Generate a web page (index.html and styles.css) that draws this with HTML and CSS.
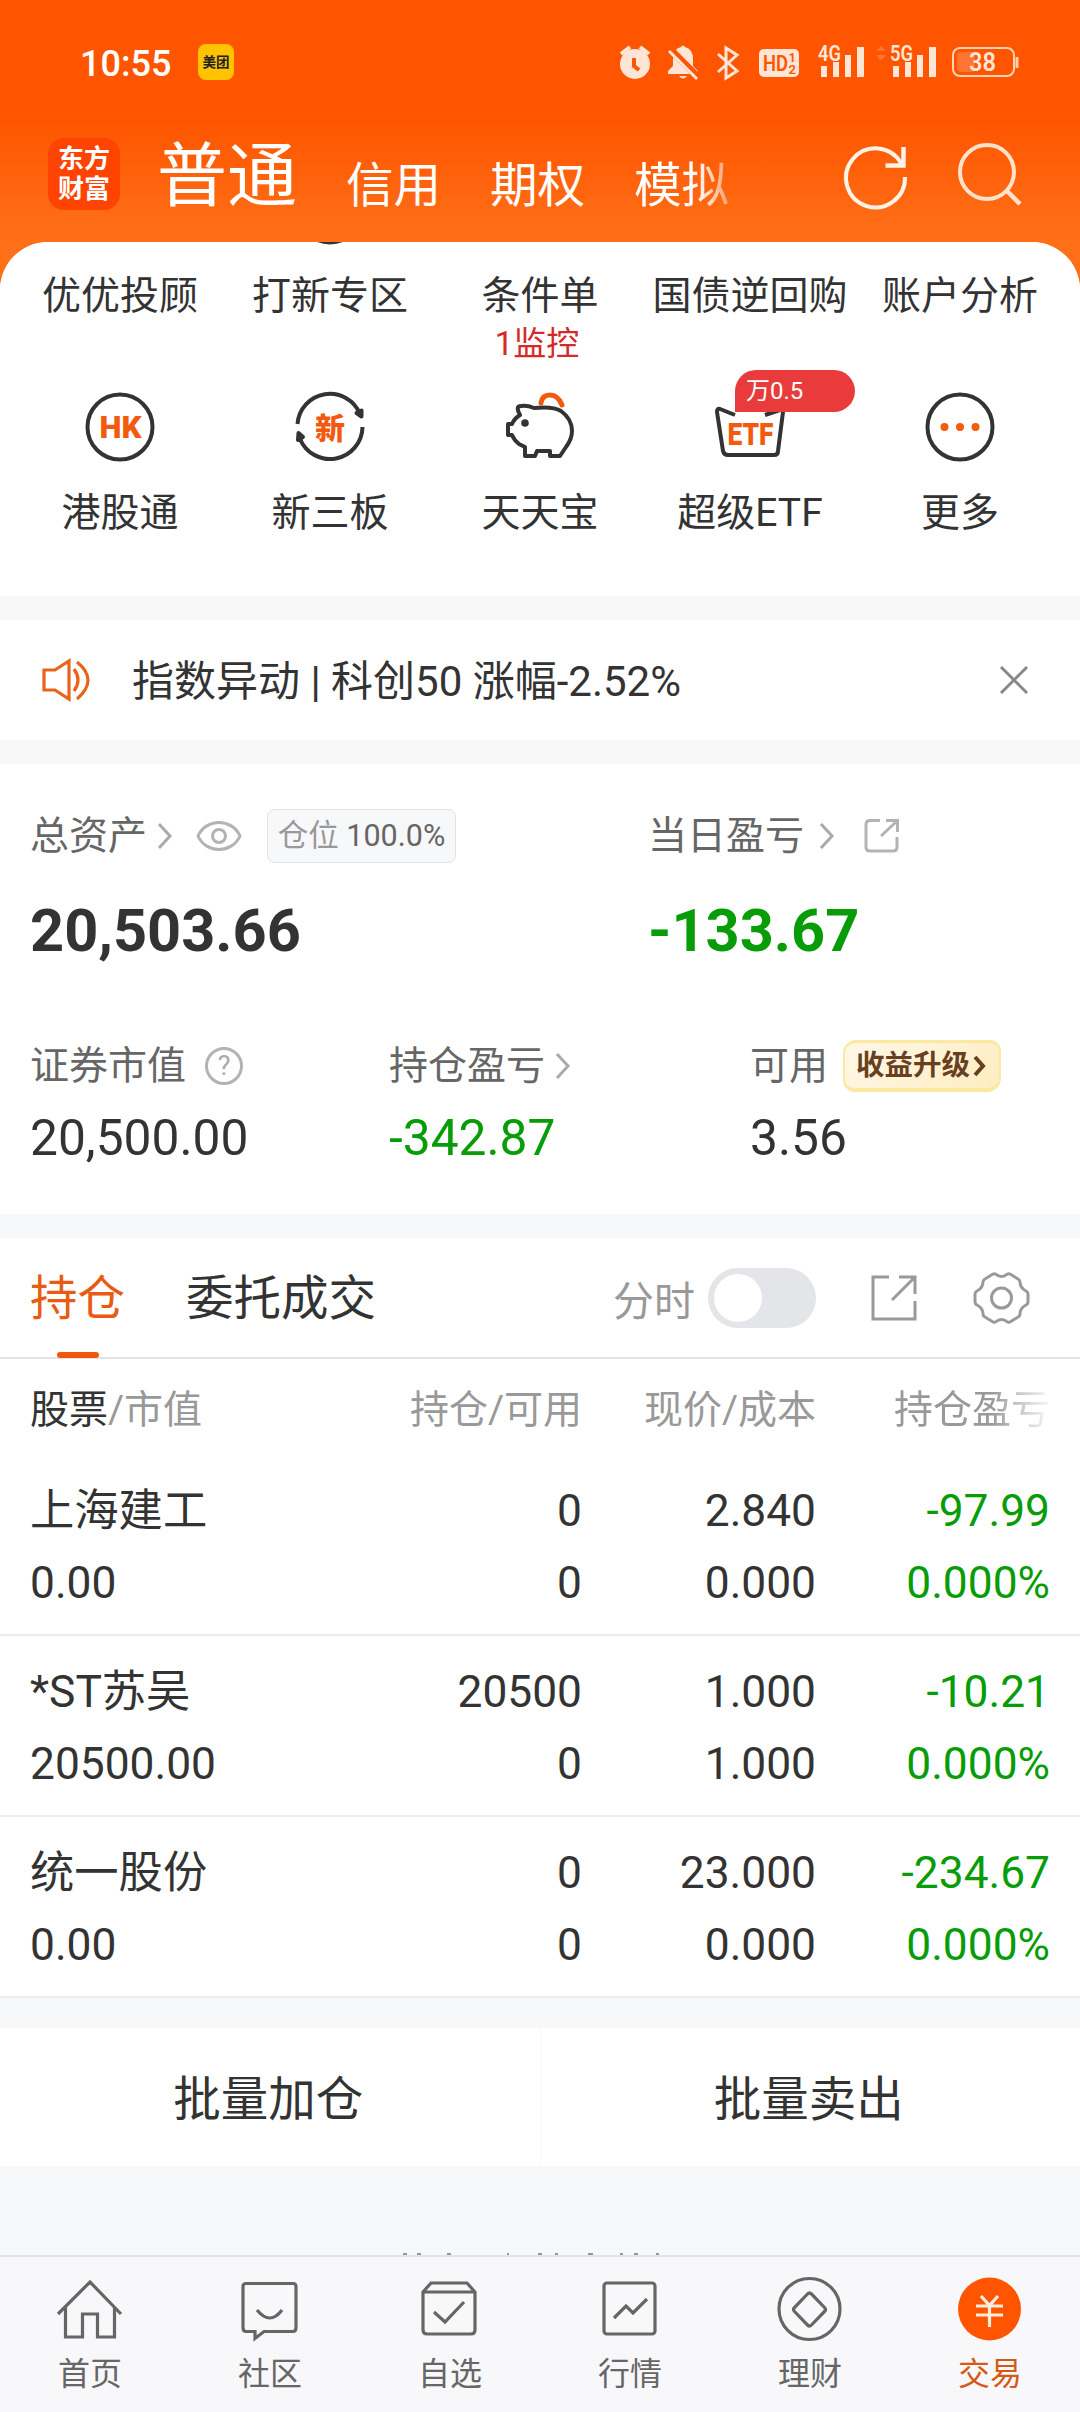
FILE: index.html
```html
<!DOCTYPE html>
<html lang="zh-CN">
<head>
<meta charset="utf-8">
<title>交易</title>
<link rel="stylesheet" href="styles.css">
</head>
<body>
<div class="screen">
  <header class="top">
    <div class="status">
      <span class="clock">10:55</span>
      <span class="app-badge">美团</span>
      <svg class="status-icons" viewBox="610 40 420 44" width="420" height="44">
        <g fill="#ffe5d6">
          <circle cx="635" cy="64" r="15"/>
          <path d="M621 54l9-7M649 54l-9-7" stroke="#ffe5d6" stroke-width="4"/>
          <path d="M634 58v8l5 4" stroke="#ff5500" stroke-width="4" fill="none"/>
          <path d="M681 47q2-3 4 0q8 2 8 12v7l5 5v3h-30v-3l5-5v-7q0-10 8-12zM679 76h8q-4 5-8 0z"/>
          <path d="M670 49l28 28" stroke="#ff5500" stroke-width="7"/>
          <path d="M669 51l28 28" stroke="#ffe5d6" stroke-width="3"/>
          <path d="M718 54l19 17l-11 7v-30l11 7l-19 17" fill="none" stroke="#ffe5d6" stroke-width="3"/>
          <rect x="759" y="49" width="40" height="28" rx="5"/>
          <path d="M821 66h6v11h-6zM833 62h6v15h-6zM845 55h6v22h-6zM857 47h7v30h-7zM893 66h6v11h-6zM905 62h6v15h-6zM917 55h6v22h-6zM929 47h7v30h-7z"/>
        </g>
        <path d="M881 46l5 5h-10zM881 61l5-6h-10z" fill="#ff7430"/>
        <g class="status-label" fill="#ffe5d6">
          <text x="818" y="61" font-size="22" textLength="23" lengthAdjust="spacingAndGlyphs">4G</text>
          <text x="890" y="61" font-size="22" textLength="23" lengthAdjust="spacingAndGlyphs">5G</text>
          <text x="763" y="71" font-size="22" fill="#ff5500" textLength="25" lengthAdjust="spacingAndGlyphs">HD</text>
          <text font-size="13" fill="#ff5500"><tspan x="788.500" y="62">1</tspan><tspan x="788.500" y="74">2</tspan></text>
        </g>
        <rect x="953" y="48" width="61" height="28" rx="7" fill="none" stroke="#ffd2b0" stroke-width="2"/>
        <rect x="957" y="52" width="18" height="20" rx="4" fill="#ff7433"/>
        <path d="M1017 57v11" stroke="#ffd2b0" stroke-width="3"/>
        <text class="status-label" x="969" y="71" font-size="25" textLength="27" lengthAdjust="spacingAndGlyphs" fill="#ffe5d6">38</text>
      </svg>
    </div>
    <div class="titlebar">
      <div class="logo">东方<br>财富</div>
      <nav class="account-tabs">
        <span class="account on">普通</span>
        <span class="account">信用</span>
        <span class="account">期权</span>
        <span class="account last">模拟</span>
      </nav>
      <svg class="top-actions" viewBox="840 138 190 74" width="190" height="74" fill="none">
        <path d="M901 162A29.500 29.500 0 1 0 905 176" stroke="#fff3e8" stroke-width="4"/>
        <path d="M903.500 146v18.500h-18" stroke="#fff3e8" stroke-width="4.500"/>
        <circle cx="987" cy="171" r="27" stroke="#ffe2cb" stroke-width="4"/>
        <path d="M1006 189l14 14" stroke="#ffe2cb" stroke-width="4.500"/>
      </svg>
    </div>
  </header>

  <main class="panel">
    <section class="shortcuts">
      <svg class="peek" viewBox="0 242 1080 3" width="1080" height="3"><circle cx="330" cy="210" r="34.500" fill="#333"/></svg>
      <div class="shortcut-row first">
        <div class="shortcut"><span>优优投顾</span></div>
        <div class="shortcut"><span>打新专区</span></div>
        <div class="shortcut"><span>条件单</span><em class="monitor">1监控</em></div>
        <div class="shortcut"><span>国债逆回购</span></div>
        <div class="shortcut"><span>账户分析</span></div>
      </div>
      <div class="shortcut-row">
        <div class="shortcut">
          <svg class="glyph" viewBox="80 387 80 80"><circle cx="120" cy="427" r="32.500"/><text class="orange-text" x="99.500" y="438" font-size="31" textLength="42" lengthAdjust="spacingAndGlyphs">HK</text></svg>
          <span>港股通</span>
        </div>
        <div class="shortcut">
          <svg class="glyph" viewBox="290 387 80 80"><path d="M297.500 424A32.500 32.500 0 0 1 360 414M362.500 427A32.500 32.500 0 0 1 300 439"/><path d="M356.500 413l5-2.500 0 6zM303 437l-5 3 .5-7z" fill="#333"/><text class="orange-text" x="315" y="438.500" font-size="30">新</text></svg>
          <span>新三板</span>
        </div>
        <div class="shortcut">
          <svg class="glyph" viewBox="500 387 80 80"><path d="M541 403q1-8 9-8t12 10" stroke="#f15a0f" stroke-linecap="round" stroke-width="5"/><path d="M520 415q-5-9 1-9q6-1 13 2q19-2 27 3q11 8 11 20q0 8-6 16l-6 9h-10v-5h-13l-2 5h-10v-9l-6-3q-5-4-7-9h-4v-11h4q2-5 8-9z"/><circle cx="525" cy="423" r="3.800" fill="#333" stroke="none"/></svg>
          <span>天天宝</span>
        </div>
        <div class="shortcut">
          <svg class="glyph" viewBox="710 387 80 80"><path d="M735 415l-15-6q-3-1-3 3l6 39q1 4 5 4h46q4 0 4-4l5-39q0-3-3-2l-15 5"/><text class="orange-text" x="727.500" y="444.500" font-size="32" textLength="46" lengthAdjust="spacingAndGlyphs">ETF</text></svg>
          <span>超级ETF</span><i class="rate-tag">万0.5</i>
        </div>
        <div class="shortcut">
          <svg class="glyph" viewBox="920 387 80 80"><circle cx="960" cy="427" r="32.500"/><g fill="#f15a0f" stroke="none"><circle cx="944.500" cy="427" r="4"/><circle cx="960" cy="427" r="4"/><circle cx="975.500" cy="427" r="4"/></g></svg>
          <span>更多</span>
        </div>
      </div>
    </section>

    <section class="notice">
      <svg viewBox="40 658 52 44" width="52" height="44" fill="none" stroke="#e8641b" stroke-width="3.200"><path d="M44 670v20h11l14 9v-38l-14 9z"/><path d="M74 669q8 11 0 22M77 662q22 18 0 37"/></svg>
      <span class="notice-text">指数异动 | 科创50 涨幅-2.52%</span>
      <svg viewBox="998 664 32 32" width="32" height="32" fill="none" stroke="#888" stroke-width="3"><path d="M1001 667l26 26M1027 667l-26 26"/></svg>
    </section>

    <section class="assets">
      <div class="asset-main">
        <div class="asset total">
          <div class="label"><span>总资产</span>
            <svg class="chev" viewBox="0 0 16 26"><path d="M2 1l11 12-11 12"/></svg>
            <svg class="eye" viewBox="0 0 46 34" width="46" height="34"><path d="M2 17C10-1 36-1 44 17C36 35 10 35 2 17z"/><circle cx="23" cy="17" r="6.500"/></svg>
            <span class="position">仓位 <b>100.0%</b></span>
          </div>
          <strong>20,503.66</strong>
        </div>
        <div class="asset">
          <div class="label"><span>当日盈亏</span>
            <svg class="chev far" viewBox="0 0 16 26"><path d="M2 1l11 12-11 12"/></svg>
            <svg class="share" viewBox="0 0 36 36" width="36" height="36"><path d="M16 2.500H6q-4 0-4 4V29q0 4 4 4h23q4 0 4-4V19M22 2.500h11.500V14M33 3L17 18"/></svg>
          </div>
          <strong class="down">-133.67</strong>
        </div>
      </div>
      <div class="asset-sub">
        <div class="asset market"><div class="label"><span>证券市值</span><i class="help">?</i></div><p>20,500.00</p></div>
        <div class="asset holding"><div class="label"><span>持仓盈亏</span><svg class="chev" viewBox="0 0 16 26"><path d="M2 1l11 12-11 12"/></svg></div><p class="down">-342.87</p></div>
        <div class="asset"><div class="label"><span>可用</span><span class="upgrade">收益升级<svg viewBox="0 0 14 22" width="14" height="22"><path d="M2 2l8 9-8 9"/></svg></span></div><p>3.56</p></div>
      </div>
    </section>

    <section class="positions">
      <div class="tabs">
        <span class="tab on">持仓</span>
        <span class="tab">委托成交</span>
        <span class="minute">分时</span>
        <span class="switch"></span>
        <svg class="tool" viewBox="868 1272 52 52" width="52" height="52"><path d="M889 1277h-16v42h42v-18M899 1277h16v17M915 1277l-23 23"/></svg>
        <svg class="tool gear" viewBox="972 1270 60 56" width="60" height="56"><path d="M993 1274q2-1 4 1q4.500 3 9 0q2-2 4-1l8 5q2 1 2 3q0 6 6 9q2 1 2 3v8q0 2-2 3q-6 3-6 9q0 2-2 3l-8 5q-2 1-4-1q-4.500-3-9 0q-2 2-4 1l-8-5q-2-1-2-3q0-6-6-9q-2-1-2-3v-8q0-2 2-3q6-3 6-9q0-2 2-3z"/><circle cx="1001.500" cy="1298" r="10"/></svg>
      </div>
      <div class="row head"><span><b>股票</b>/市值</span><span>持仓/可用</span><span>现价/成本</span><span class="fade">持仓盈亏</span></div>
      <div class="row"><span>上海建工</span><span>0</span><span>2.840</span><span class="down">-97.99</span><span>0.00</span><span>0</span><span>0.000</span><span class="down">0.000%</span></div>
      <div class="row"><span>*ST苏吴</span><span>20500</span><span>1.000</span><span class="down">-10.21</span><span>20500.00</span><span>0</span><span>1.000</span><span class="down">0.000%</span></div>
      <div class="row"><span>统一股份</span><span>0</span><span>23.000</span><span class="down">-234.67</span><span>0.00</span><span>0</span><span>0.000</span><span class="down">0.000%</span></div>
    </section>

    <div class="batch"><button>批量加仓</button><button>批量卖出</button></div>
    <svg class="footer-peek" viewBox="390 2253 300 2" width="300" height="2"><path d="M403 2254h4m10 0h4m26 0h4m56 0h2m29 0h4m13 0h3m30 0h5m27 0h3m11 0h4m18 0h3" stroke="#777" stroke-width="1.500"/></svg>
  </main>

  <nav class="bottom">
    <a><svg viewBox="55 2275 70 68"><path d="M58 2314l32-32 31 32M65.500 2307v30h17v-23h15v23h17v-30"/></svg>首页</a>
    <a><svg viewBox="235 2275 70 68"><path d="M246 2283.500h47q3 0 3 3v41q0 4-3 4h-29l-9 7v-7h-9q-3 0-3-4v-41q0-3 3-3zM257 2310q13 16 25 0"/></svg>社区</a>
    <a><svg viewBox="415 2275 70 68"><path d="M431 2283h36l8 9v38q0 4-4 4h-44q-4 0-4-4v-38zM423 2292h52M434 2312l11 10 19-20"/></svg>自选</a>
    <a><svg viewBox="595 2275 70 68"><rect x="604" y="2283" width="51" height="51" rx="3"/><path d="M614 2318l12-12 7 7 14-14"/></svg>行情</a>
    <a><svg viewBox="775 2275 70 68"><circle cx="809.500" cy="2309" r="30.500"/><path d="M807.500 2294q2-2 4 0l13 13.500q2 2 0 4l-13 13.500q-2 2-4 0l-13-13.500q-2-2 0-4z"/></svg>理财</a>
    <a class="on"><svg viewBox="955 2275 70 68"><circle cx="989.500" cy="2309" r="31.500" fill="#ff5500" stroke="none"/><path d="M981 2296l8.500 9.500 8.500-9.500M976 2306h27M976 2315h27M989.500 2305v22" stroke="#ffeede"/></svg>交易</a>
  </nav>
</div>
</body>
</html>
```
FILE: styles.css
```css
* { box-sizing: border-box; }
body { margin: 0; font-family: Roboto, "Noto Sans CJK SC", sans-serif; color: #333; background: #f7f8fa; }
.screen { width: 1080px; height: 2412px; overflow: hidden; display: flex; flex-direction: column; background: linear-gradient(#ff5500 0 120px, #ff6f18 236px, #ff6f18 320px); }
svg { display: block; flex: none; }
span, em, i { font-style: normal; white-space: nowrap; }
.down { color: #089c08; }

.top { height: 242px; flex: none; }
.status { height: 124px; padding: 0 50px 0 80px; display: flex; align-items: center; }
.clock { font-size: 36px; font-weight: 500; line-height: 40px; color: #fff; width: 118px; padding-top: 3px; }
.app-badge { width: 36px; height: 36px; border-radius: 8px; background: #ffc300; color: #222; font-size: 13.500px; font-weight: 700; line-height: 37px; text-align: center; }
.status-icons { margin-left: auto; }
.status-label { font-family: Roboto, sans-serif; font-weight: 600; }
.titlebar { height: 118px; padding-left: 48px; padding-right: 50px; display: flex; align-items: flex-start; padding-top: 14px; }
.logo { width: 72px; height: 72px; border-radius: 16px; background: #ff4300; color: #fff; font-size: 26px; font-weight: 700; line-height: 30px; text-align: center; padding-top: 6px; }
.account-tabs { display: flex; gap: 49px; margin-left: 37px; height: 80px; color: #fff; width: 630px; }
.account { font-size: 47.500px; line-height: 97px; }
.account.on { font-size: 70px; line-height: 78px; }
.account.last { -webkit-mask-image: linear-gradient(90deg, #000 62px, transparent 115px); mask-image: linear-gradient(90deg, #000 62px, transparent 115px); }
.top-actions { margin-left: auto; margin-top: 1px; }

.panel { flex: 1; min-height: 0; overflow: hidden; background: #f7f8fa; border-radius: 48px 48px 0 0; }
.shortcuts { height: 354px; background: #fff; }
.shortcut-row { display: flex; padding: 0 15px; height: 180px; }
.shortcut-row.first { height: 142px; padding-top: 26px; }
.shortcut { width: 210px; display: flex; flex-direction: column; align-items: center; font-size: 39px; line-height: 50px; position: relative; }
.monitor { font-size: 33px; line-height: 40px; color: #d42a2a; margin: 3px 6px 0 0; }
.glyph { width: 80px; height: 80px; margin-bottom: 21px; fill: none; stroke: #333; stroke-width: 4; stroke-linejoin: round; }
.orange-text { fill: #f15a0f; stroke: none; font-weight: 900; }
.rate-tag { position: absolute; left: 90px; top: -17px; width: 120px; height: 42px; border-radius: 21px 21px 21px 0; background: #e93b3b; color: #fff; font-size: 24px; line-height: 42px; padding-left: 11px; }

.notice { margin-top: 24px; height: 120px; background: #fff; padding: 0 50px 0 40px; display: flex; align-items: center; }
.notice-text { flex: 1; margin-left: 40px; font-size: 42px; line-height: 60px; padding-top: 3px; }

.assets { margin-top: 24px; height: 450px; background: #fff; padding: 40px 30px 0; }
.asset-main, .asset-sub { display: flex; }
.asset-main { height: 230px; }
.asset.total { width: 618px; }
.asset.market { width: 359px; }
.asset.holding { width: 361px; }
.label { height: 64px; display: flex; align-items: center; color: #666; font-size: 39px; line-height: 50px; }
.chev { width: 16px; height: 26px; margin-left: 10px; fill: none; stroke: #aaa; stroke-width: 3; }
.chev.far { margin-left: 15px; }
.eye { margin-left: 23px; fill: none; stroke: #b3b3b3; stroke-width: 3; }
.share { margin-left: 29px; fill: none; stroke: #b3b3b3; stroke-width: 3; }
.position { margin-left: 25px; width: 189px; height: 54px; border: 1px solid #e0e2e6; border-radius: 8px; background: #f7f8fa; color: #999; font-size: 30.500px; line-height: 52px; text-align: center; }
.position b { font-weight: 400; color: #666; }
.asset strong { display: block; font-size: 59.500px; line-height: 70px; margin-top: 28px; }
.asset p { margin: 10px 0 0; font-size: 49.700px; line-height: 60px; }
.help { width: 38px; height: 38px; margin-left: 19px; border: 3px solid #b3b3b3; border-radius: 50%; color: #aaa; font-size: 27px; line-height: 33px; text-align: center; }
.upgrade { margin-left: 15px; width: 158px; height: 52px; border-radius: 13px 11px 14px 12px; border: 3px solid #fbe9a0; border-width: 3px 2px 4px; background: linear-gradient(135deg, #fff8e8, #ffedc0); color: #68401f; font-size: 28.500px; font-weight: 700; line-height: 45px; display: flex; align-items: center; padding-left: 11px; }
.upgrade svg { margin-left: 3px; fill: none; stroke: #68401f; stroke-width: 4; }

.positions { margin-top: 24px; background: #fff; }
.tabs { height: 121px; border-bottom: 2px solid #e2e3e6; padding: 0 48px 0 30px; display: flex; align-items: center; }
.tab { font-size: 47.500px; line-height: 123px; height: 120px; margin-right: 61px; position: relative; }
.tab.on { color: #ea5a12; }
.tab.on::after { content: ""; position: absolute; left: 27px; bottom: 0; width: 42px; height: 6px; border-radius: 3px; background: #f2570d; }
.minute { margin-left: auto; color: #999; font-size: 41px; margin-right: 13px; }
.switch { width: 108px; height: 60px; border-radius: 30px; background: #e4e5e8; padding: 6px; margin-right: 52px; }
.switch::before { content: ""; display: block; width: 48px; height: 48px; border-radius: 50%; background: #fff; }
.tool { fill: none; stroke: #999; stroke-width: 3; }
.gear { margin-left: 52px; }
.row { height: 181px; padding: 20px 30px 15px 30px; border-bottom: 2px solid #ebecef; display: grid; grid-template-columns: 317px 235px 234px 234px; grid-template-rows: 72px 72px; font-size: 44.300px; line-height: 72px; }
.row span:not(:nth-child(4n + 1)) { text-align: right; }
.row.head { height: 96px; border: 0; padding-top: 15px; grid-template-rows: 72px; color: #999; font-size: 39px; }
.row.head b { font-weight: 400; color: #333; }
.fade { -webkit-mask-image: linear-gradient(90deg, #000 175px, transparent 238px); mask-image: linear-gradient(90deg, #000 175px, transparent 238px); }

.batch { margin-top: 30px; height: 138px; display: flex; gap: 1px; }
.batch button { flex: 1; border: 0; padding: 0 3px 4px 0; background: #fff; color: #333; font: inherit; font-size: 47.500px; }
.footer-peek { margin: 87px 0 0 390px; }

.bottom { flex: none; height: 157px; border-top: 2px solid #e1e3e5; background: #f8f8fa; display: flex; position: relative; }
.bottom a { width: 180px; display: flex; flex-direction: column; align-items: center; padding-top: 18px; color: #666; font-size: 32px; line-height: 44px; }
.bottom svg { width: 70px; height: 68px; margin-bottom: 9px; fill: none; stroke: #666; stroke-width: 3.200; }
.bottom .on { color: #d45a16; }
```
